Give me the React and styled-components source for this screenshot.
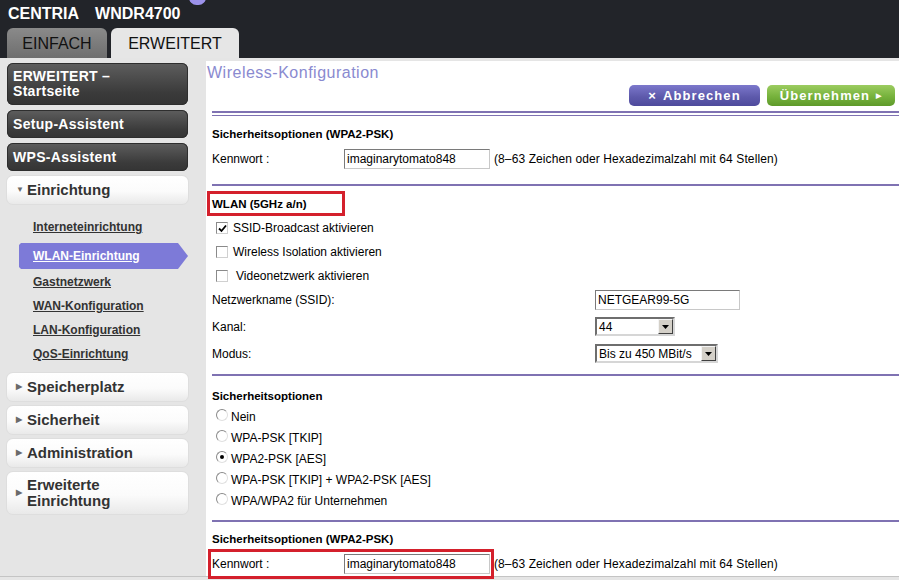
import styled, { createGlobalStyle } from "styled-components";

const GlobalStyle = createGlobalStyle`
  html, body {
    margin: 0;
    padding: 0;
    background: #e5e5e5;
    font-family: "Liberation Sans", Arial, sans-serif;
    overflow: hidden;
  }
`;

const Page = styled.div`
  width: 899px;
  height: 580px;
  overflow: hidden;
  background: #e5e5e5;
`;

const Header = styled.header`
  position: relative;
  height: 58px;
  background: #222429;
  display: flex;
  flex-direction: column;
`;

const Blob = styled.span`
  position: absolute;
  left: 189px;
  top: -10px;
  width: 17px;
  height: 15px;
  border-radius: 8px;
  background: #9c92ea;
`;

const Brand = styled.div`
  height: 28px;
  padding: 5px 0 0 8px;
  box-sizing: border-box;
  color: #fff;
  font-size: 16px;
  font-weight: bold;
  line-height: 18px;
  display: flex;
  gap: 16px;
`;

const Tabs = styled.nav`
  display: flex;
  gap: 4px;
  padding-left: 7px;
  height: 30px;
`;

const Tab = styled.div`
  width: ${({ $w }) => $w}px;
  height: 30px;
  border-radius: 6px 6px 0 0;
  background: ${({ $active }) =>
    $active ? "#e6e6e6" : "linear-gradient(#8a8a8a, #6e6e6e)"};
  color: #111;
  font-size: 16px;
  line-height: 31px;
  text-align: center;
`;

const Main = styled.div`
  display: flex;
  height: 519px;
  border-bottom: 1px solid #c4c4c4;
  box-sizing: border-box;
`;

const Sidebar = styled.aside`
  width: 206px;
  flex: none;
  padding: 5px 0 0 7px;
  box-sizing: border-box;
  display: flex;
  flex-direction: column;
  & > * {
    flex-shrink: 0;
  }
`;

const DarkButton = styled.div`
  width: 181px;
  height: ${({ $h }) => $h || 28}px;
  margin-bottom: 5px;
  box-sizing: border-box;
  border-radius: 6px;
  background: linear-gradient(#5e5e5e, #3b3b3b 70%, #343434);
  box-shadow: inset 0 0 0 1px #2e2e2e;
  color: #fff;
  font-size: 14px;
  font-weight: bold;
  letter-spacing: 0.3px;
  line-height: 15px;
  padding-left: 6px;
  display: flex;
  align-items: center;
`;

const LightButton = styled.div`
  width: 181px;
  height: ${({ $h }) => $h || 28}px;
  margin-bottom: 5px;
  box-sizing: border-box;
  border-radius: 6px;
  background: linear-gradient(#ffffff, #fbfbfb 55%, #e9e9e9);
  box-shadow: 0 0 0 1px #dedede;
  color: #333;
  font-size: 15px;
  font-weight: bold;
  line-height: 16px;
  padding-left: 9px;
  display: flex;
  align-items: center;
  gap: 3px;
`;

const Arrow = styled.span`
  color: #6a6a6a;
  font-size: 8px;
  width: 8px;
  flex: none;
`;

const SubMenu = styled.div`
  display: flex;
  flex-direction: column;
  padding: 6px 0 7px;
`;

const SubLink = styled.a`
  display: flex;
  align-items: center;
  flex-shrink: 0;
  width: 169px;
  margin-left: 12px;
  padding-left: 14px;
  box-sizing: border-box;
  font-size: 12px;
  font-weight: bold;
  text-decoration: underline;
  color: ${({ $active }) => ($active ? "#fff" : "#333")};
  background: ${({ $active }) => ($active ? "#7d7ad8" : "transparent")};
  clip-path: ${({ $active }) =>
    $active
      ? "polygon(2px 0, 159px 0, 169px 50%, 159px 100%, 2px 100%, 0 calc(100% - 2px), 0 2px)"
      : "none"};
  height: ${({ $active }) => ($active ? 26 : 24)}px;
  margin-top: ${({ $active }) => ($active ? 4 : 0)}px;
  margin-bottom: ${({ $active }) => ($active ? 1 : 0)}px;
`;

const Content = styled.section`
  flex: 1;
  margin-top: 3px;
  background: #fff;
  display: flex;
  flex-direction: column;
  & > * {
    flex-shrink: 0;
  }
`;

const Title = styled.h1`
  margin: 0;
  height: 24px;
  padding: 3px 0 0 1px;
  box-sizing: border-box;
  font-size: 16px;
  font-weight: normal;
  letter-spacing: 0.5px;
  color: #8a8ad0;
  line-height: 17px;
`;

const ButtonRow = styled.div`
  display: flex;
  justify-content: flex-end;
  gap: 7px;
  padding-right: 4px;
  height: 21px;
`;

const ActionButton = styled.button`
  width: ${({ $w }) => $w}px;
  height: 21px;
  border: none;
  border-radius: 5px;
  background: ${({ $green }) =>
    $green
      ? "linear-gradient(#9ccc60, #76b23c 55%, #5e9a2a)"
      : "linear-gradient(#7c78cc, #5e5aac 55%, #4e4a9c)"};
  color: #fff;
  font-family: inherit;
  font-size: 13px;
  font-weight: bold;
  letter-spacing: 1.1px;
  padding: 0;
  display: flex;
  align-items: center;
  justify-content: center;
  gap: 6px;
`;

const Rule = styled.div`
  margin: ${({ $mt }) => $mt || 0}px 0 0 6px;
  border-top: 2px solid #7f72b2;
`;

const DoubleRule = styled.div`
  margin: 5px 0 0 6px;
  height: 2px;
  border-top: 2px solid #7f72b2;
  border-bottom: 1px solid #7f72b2;
`;

const Section = styled.div`
  padding-left: 6px;
  display: flex;
  flex-direction: column;
  & > * {
    flex-shrink: 0;
  }
`;

const Heading = styled.div`
  margin-top: ${({ $mt }) => $mt || 0}px;
  height: 16px;
  line-height: 16px;
  font-size: 11.5px;
  font-weight: bold;
  color: #000;
`;

const MarkedHeading = styled.div`
  margin: 5px 0 0 -5px;
  width: 138px;
  height: 25px;
  box-sizing: border-box;
  border: 3px solid #d4202c;
  padding-left: 2px;
  display: flex;
  align-items: center;
  font-size: 11.5px;
  font-weight: bold;
`;

const Label = styled.span`
  font-size: 12px;
  color: #000;
  width: ${({ $w }) => $w}px;
  flex: none;
`;

const Hint = styled.span`
  font-size: 12px;
  color: #000;
  letter-spacing: 0.1px;
  flex: none;
`;

const PassRow = styled.div`
  margin: 2px 0 0 -4px;
  width: 286px;
  height: 30px;
  box-sizing: border-box;
  border: 3px solid ${({ $marked }) => ($marked ? "#d4202c" : "transparent")};
  border-right: none;
  padding-left: 1px;
  display: flex;
  align-items: center;
  white-space: nowrap;
  overflow: visible;
`;

const RedEdge = styled.span`
  width: 3px;
  height: 30px;
  flex: none;
  margin-left: 1px;
  background: ${({ $marked }) => ($marked ? "#d4202c" : "transparent")};
`;

const TextBox = styled.div`
  width: ${({ $w }) => $w}px;
  height: 20px;
  box-sizing: border-box;
  border: 1px solid;
  border-color: #7a7a7a #c8c8c8 #c8c8c8 #7a7a7a;
  font-size: 12px;
  line-height: 18px;
  padding-left: 2px;
  color: #000;
  flex: none;
`;

const CheckRow = styled.label`
  height: 24px;
  display: flex;
  align-items: center;
  padding-left: 4px;
  font-size: 12px;
  gap: ${({ $gap }) => $gap || 5}px;
`;

const Box = styled.span`
  width: 12px;
  height: 12px;
  box-sizing: border-box;
  border: 1px solid;
  border-color: #8a8a8a #d0d0d0 #d0d0d0 #8a8a8a;
  background: #fff;
  display: flex;
  align-items: center;
  justify-content: center;
`;

const FormGroup = styled.div`
  margin-top: -2px;
  display: flex;
  flex-direction: column;
`;

const FormRow = styled.div`
  height: 27px;
  display: flex;
  align-items: center;
`;

const SelectBox = styled.div`
  width: ${({ $w }) => $w}px;
  height: 19px;
  box-sizing: border-box;
  border: 2px solid;
  border-color: #6e6e6e #d6d6d6 #d6d6d6 #6e6e6e;
  display: flex;
  align-items: center;
  justify-content: space-between;
  font-size: 12px;
  padding-left: 2px;
  background: #fff;
`;

const DropButton = styled.span`
  width: 15px;
  height: 15px;
  box-sizing: border-box;
  background: #d4d0c8;
  border: 1px solid;
  border-color: #f4f4f4 #404040 #404040 #f4f4f4;
  display: flex;
  align-items: center;
  justify-content: center;
`;

const RadioGroup = styled.div`
  margin-top: 2px;
  display: flex;
  flex-direction: column;
`;

const RadioRow = styled.label`
  height: 21px;
  display: flex;
  align-items: center;
  padding-left: 4px;
  gap: 3px;
  font-size: 12px;
`;

const Circle = styled.span`
  width: 12px;
  height: 12px;
  box-sizing: border-box;
  border-radius: 50%;
  border: 1px solid;
  border-color: #8a8a8a #e0e0e0 #e0e0e0 #8a8a8a;
  background: #fff;
  display: flex;
  align-items: center;
  justify-content: center;
  margin-top: -3px;
`;

const Dot = styled.span`
  width: 4px;
  height: 4px;
  border-radius: 50%;
  background: #000;
`;

function Check({ checked }) {
  return (
    <Box>
      {checked && (
        <svg width="9" height="9" viewBox="0 0 9 9">
          <path d="M1 4.5 L3.5 7 L8 1.5" fill="none" stroke="#000" strokeWidth="1.8" />
        </svg>
      )}
    </Box>
  );
}

function Select({ width, value }) {
  return (
    <SelectBox $w={width}>
      {value}
      <DropButton>
        <svg width="7" height="4" viewBox="0 0 7 4">
          <path d="M0 0 H7 L3.5 4 Z" fill="#000" />
        </svg>
      </DropButton>
    </SelectBox>
  );
}

function PasswordRow({ marked }) {
  return (
    <PassRow $marked={marked}>
      <Label $w={132}>Kennwort :</Label>
      <TextBox $w={146}>imaginarytomato848</TextBox>
      <RedEdge $marked={marked} />
      <Hint>(8–63 Zeichen oder Hexadezimalzahl mit 64 Stellen)</Hint>
    </PassRow>
  );
}

const links = [
  "Interneteinrichtung",
  "WLAN-Einrichtung",
  "Gastnetzwerk",
  "WAN-Konfiguration",
  "LAN-Konfiguration",
  "QoS-Einrichtung",
];

const radios = [
  "Nein",
  "WPA-PSK [TKIP]",
  "WPA2-PSK [AES]",
  "WPA-PSK [TKIP] + WPA2-PSK [AES]",
  "WPA/WPA2 für Unternehmen",
];

export default function App() {
  return (
    <Page>
      <GlobalStyle />
      <Header>
        <Blob />
        <Brand>
          <span>CENTRIA</span>
          <span>WNDR4700</span>
        </Brand>
        <Tabs>
          <Tab $w={100}>EINFACH</Tab>
          <Tab $w={128} $active>
            ERWEITERT
          </Tab>
        </Tabs>
      </Header>

      <Main>
        <Sidebar>
          <DarkButton $h={42}>
            ERWEITERT –<br />
            Startseite
          </DarkButton>
          <DarkButton>Setup-Assistent</DarkButton>
          <DarkButton>WPS-Assistent</DarkButton>
          <LightButton>
            <Arrow>▼</Arrow>Einrichtung
          </LightButton>
          <SubMenu>
            {links.map((l) => (
              <SubLink key={l} $active={l === "WLAN-Einrichtung"}>
                {l}
              </SubLink>
            ))}
          </SubMenu>
          <LightButton>
            <Arrow>▶</Arrow>Speicherplatz
          </LightButton>
          <LightButton>
            <Arrow>▶</Arrow>Sicherheit
          </LightButton>
          <LightButton>
            <Arrow>▶</Arrow>Administration
          </LightButton>
          <LightButton $h={42}>
            <Arrow>▶</Arrow>
            <span>
              Erweiterte
              <br />
              Einrichtung
            </span>
          </LightButton>
        </Sidebar>

        <Content>
          <Title>Wireless-Konfiguration</Title>
          <ButtonRow>
            <ActionButton $w={131}>
              <span>×</span>Abbrechen
            </ActionButton>
            <ActionButton $w={128} $green>
              Übernehmen<span style={{ fontSize: 7 }}>▶</span>
            </ActionButton>
          </ButtonRow>
          <DoubleRule />

          <Section>
            <Heading $mt={10}>Sicherheitsoptionen (WPA2-PSK)</Heading>
            <PasswordRow />
          </Section>
          <Rule $mt={10} />

          <Section>
            <MarkedHeading>WLAN (5GHz a/n)</MarkedHeading>
            <CheckRow>
              <Check checked />
              SSID-Broadcast aktivieren
            </CheckRow>
            <CheckRow>
              <Check />
              Wireless Isolation aktivieren
            </CheckRow>
            <CheckRow $gap={8}>
              <Check />
              Videonetzwerk aktivieren
            </CheckRow>
            <FormGroup>
              <FormRow>
                <Label $w={383}>Netzwerkname (SSID):</Label>
                <TextBox $w={145}>NETGEAR99-5G</TextBox>
              </FormRow>
              <FormRow>
                <Label $w={383}>Kanal:</Label>
                <Select width={80} value="44" />
              </FormRow>
              <FormRow>
                <Label $w={383}>Modus:</Label>
                <Select width={123} value="Bis zu 450 MBit/s" />
              </FormRow>
            </FormGroup>
          </Section>
          <Rule $mt={7} />

          <Section>
            <Heading $mt={12}>Sicherheitsoptionen</Heading>
            <RadioGroup>
              {radios.map((r) => (
                <RadioRow key={r}>
                  <Circle>{r === "WPA2-PSK [AES]" && <Dot />}</Circle>
                  {r}
                </RadioRow>
              ))}
            </RadioGroup>
          </Section>
          <Rule $mt={9} />

          <Section>
            <Heading $mt={9}>Sicherheitsoptionen (WPA2-PSK)</Heading>
            <PasswordRow marked />
          </Section>
        </Content>
      </Main>
    </Page>
  );
}
